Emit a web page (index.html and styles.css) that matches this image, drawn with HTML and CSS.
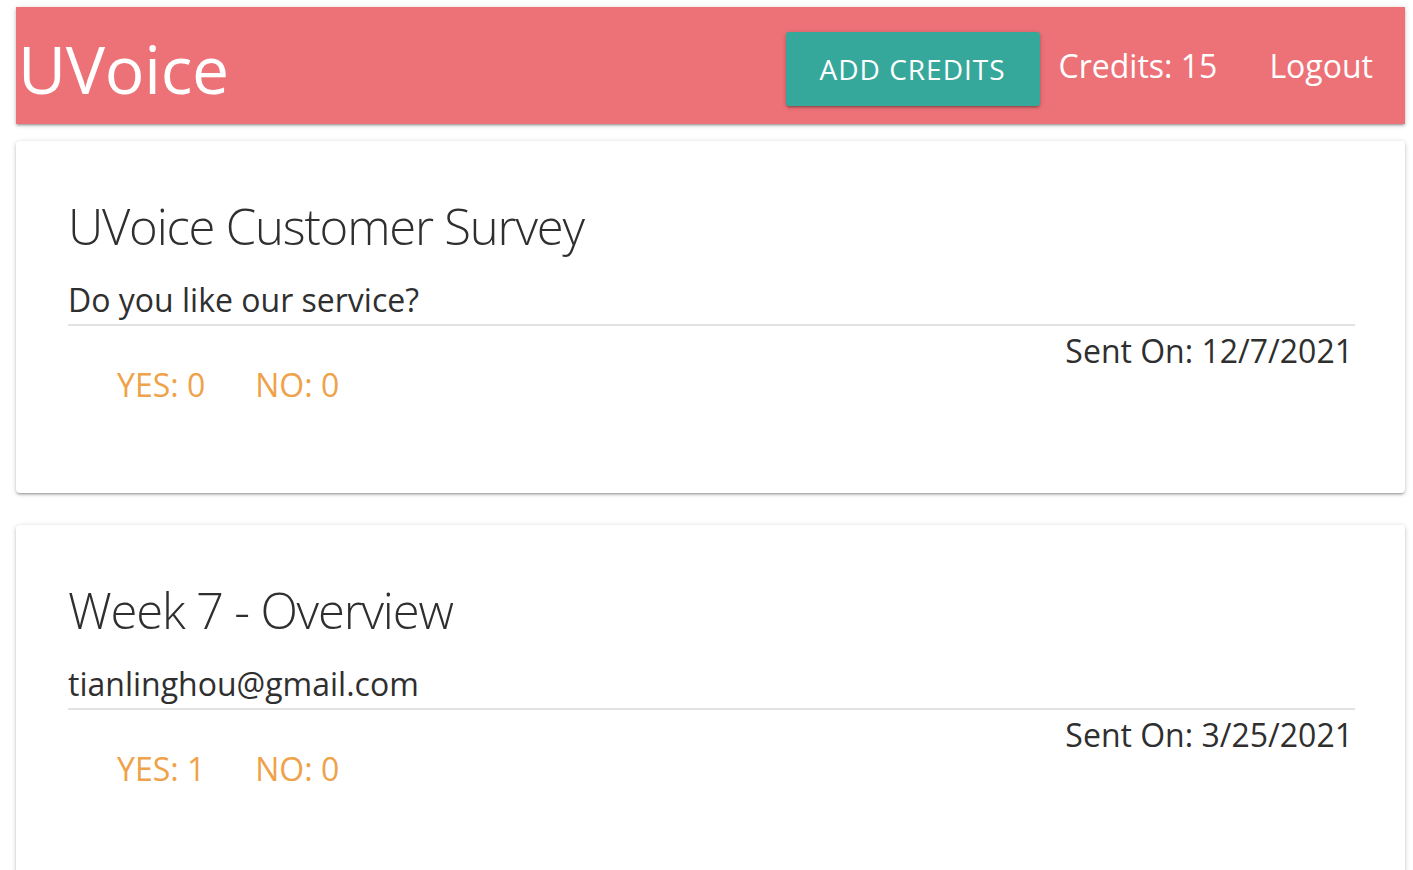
FILE: index.html
```html
<!DOCTYPE html>
<html lang="en">
<head>
<meta charset="utf-8">
<title>UVoice</title>
<link rel="stylesheet" href="styles.css">
</head>
<body>
<div class="page">
  <nav class="navbar">
    <a class="logo" href="#">UVoice</a>
    <ul class="nav-links">
      <li><a class="btn" href="#">Add Credits</a></li>
      <li class="credits">Credits: 15</li>
      <li><a class="nav-link" href="#">Logout</a></li>
    </ul>
  </nav>

  <main class="surveys">
    <section class="card">
      <h2 class="card-title">UVoice Customer Survey</h2>
      <p class="card-body">Do you like our service?</p>
      <p class="sent-on">Sent On: 12/7/2021</p>
      <div class="card-action">
        <span class="vote">YES: 0</span>
        <span class="vote">NO: 0</span>
      </div>
    </section>

    <section class="card">
      <h2 class="card-title">Week 7 - Overview</h2>
      <p class="card-body">tianlinghou@gmail.com</p>
      <p class="sent-on">Sent On: 3/25/2021</p>
      <div class="card-action">
        <span class="vote">YES: 1</span>
        <span class="vote">NO: 0</span>
      </div>
    </section>
  </main>
</div>
</body>
</html>
```

FILE: styles.css
```css
* { box-sizing: border-box; }

html, body {
  margin: 0;
  padding: 0;
  background: #ffffff;
  font-family: "Open Sans", "Noto Sans", "Liberation Sans", sans-serif;
  color: #2f2f2f;
}

.page {
  padding: 7px 8px 0 16px;
}

.navbar {
  display: flex;
  align-items: center;
  justify-content: space-between;
  height: 117px;
  background: #ed7277;
  box-shadow: 0 2px 2px 0 rgba(0,0,0,.14), 0 3px 1px -2px rgba(0,0,0,.12), 0 1px 5px 0 rgba(0,0,0,.2);
}

.logo {
  color: #fff;
  text-decoration: none;
  font-size: 66px;
  line-height: 117px;
  padding: 5px 0 0 2px;
  font-weight: 400;
  letter-spacing: -0.3px;
}

.nav-links {
  display: flex;
  align-items: center;
  list-style: none;
  margin: 0;
  padding: 0 32px 0 0;
  height: 117px;
}

.nav-links li {
  display: flex;
  align-items: center;
}

.btn {
  display: block;
  height: 74px;
  line-height: 74px;
  margin-top: 6px;
  padding: 0 34px 0 34px;
  background: #36a89b;
  color: #fff;
  text-decoration: none;
  text-transform: uppercase;
  font-size: 28px;
  letter-spacing: 1px;
  border-radius: 3px;
  box-shadow: 0 2px 2px 0 rgba(0,0,0,.14), 0 3px 1px -2px rgba(0,0,0,.12), 0 1px 5px 0 rgba(0,0,0,.2);
}

.credits,
.nav-link {
  color: #fff;
  font-size: 32px;
  line-height: 117px;
  text-decoration: none;
}

.credits {
  margin: 0 52px 0 19px;
}

.surveys {
  display: flex;
  flex-direction: column;
  gap: 32px;
  padding-top: 17px;
}

.card {
  background: #fff;
  border-radius: 4px;
  padding: 54px 50px 91px 52px;
  box-shadow: 0 2px 2px 0 rgba(0,0,0,.14), 0 3px 1px -2px rgba(0,0,0,.12), 0 1px 5px 0 rgba(0,0,0,.2);
}

.card-title {
  margin: 0;
  font-size: 49px;
  line-height: 62px;
  font-weight: 300;
  letter-spacing: -1.2px;
  color: #2f2f2f;
}

.card-body {
  margin: 23px 0 0;
  font-size: 32px;
  line-height: 40px;
  padding-bottom: 4px;
  border-bottom: 2px solid #e2e2e2;
}

.sent-on {
  margin: 8px 0 0;
  font-size: 32px;
  line-height: 34px;
  text-align: right;
  padding-right: 2px;
}

.card-action {
  display: flex;
  gap: 50px;
  padding-left: 49px;
}

.vote {
  color: #eea24a;
  font-size: 32px;
  line-height: 34px;
}
```
